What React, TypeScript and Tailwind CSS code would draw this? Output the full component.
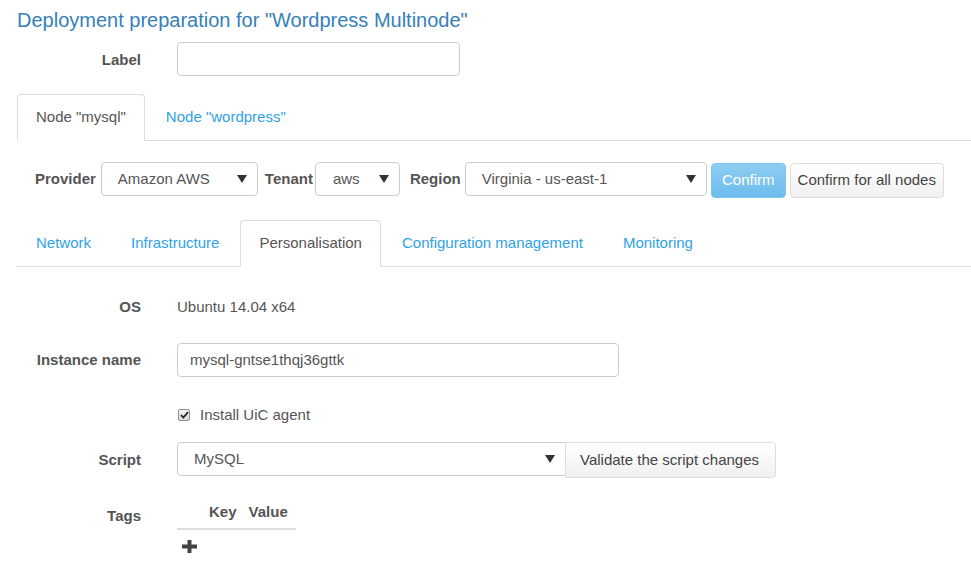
import React from 'react';

const font = { fontFamily: '"Liberation Sans", Arial, sans-serif' };

const Arrow: React.FC = () => (
  <svg width="10" height="8" viewBox="0 0 10 8" className="shrink-0">
    <path d="M0 0 L10 0 L5 8 Z" fill="#333" />
  </svg>
);

const Select: React.FC<{ value: string; className: string; pad?: string }> = ({ value, className, pad = 'pl-[16px]' }) => (
  <div className={`h-[34px] flex items-center justify-between bg-white border border-[#ccc] text-[#555] pr-[10px] ${pad} ${className}`}>
    <span>{value}</span>
    <Arrow />
  </div>
);

const NavTab: React.FC<{ label: string; active?: boolean }> = ({ label, active = false }) => (
  <div
    className={`h-[47px] px-[18px] mr-[2px] flex items-center rounded-t-[4px] border ${
      active
        ? 'bg-white border-[#ddd] border-b-white text-[#555] -mb-[1px]'
        : 'border-transparent text-[#2fa2e6]'
    }`}
  >
    {label}
  </div>
);

const Row: React.FC<{ label: string; children: React.ReactNode; className?: string }> = ({ label, children, className = '' }) => (
  <div className={`flex items-center ${className}`}>
    <div className="w-[124px] text-right font-bold text-[#555]">{label}</div>
    <div className="ml-[36px] flex items-center">{children}</div>
  </div>
);

export default function App() {
  return (
    <div className="w-[971px] h-[580px] overflow-hidden bg-white text-[15px] text-[#555] pl-[17px] pt-[9px]" style={font}>
      {/* Title */}
      <h1 className="text-[20px] leading-[22px] text-[#3680b8] font-normal">
        Deployment preparation for "Wordpress Multinode"
      </h1>

      {/* Label */}
      <Row label="Label" className="mt-[11px] h-[34px] pt-[2px]">
        <div className="w-[283px] h-[34px] -mt-[2px] border border-[#ccc] rounded-[4px] bg-white" />
      </Row>

      {/* Node tabs */}
      <div className="mt-[18px] h-[47px] flex border-b border-[#ddd]">
        <NavTab label={'Node "mysql"'} active />
        <NavTab label={'Node "wordpress"'} />
      </div>

      {/* Provider */}
      <div className="mt-[21px] h-[34px] pl-[18px] flex items-start">
        <span className="h-[34px] flex items-center font-bold mr-[5px]">Provider</span>
        <Select value="Amazon AWS" className="w-[157px] rounded-[4px]" />
        <span className="h-[34px] flex items-center font-bold ml-[7px] mr-[2px]">Tenant</span>
        <Select value="aws" className="w-[85px] rounded-[4px]" pad="pl-[17px]" />
        <span className="h-[34px] flex items-center font-bold ml-[10px] mr-[4px]">Region</span>
        <Select value="Virginia - us-east-1" className="w-[242px] rounded-[4px]" />
        <button className="shrink-0 ml-[4px] mt-[1px] h-[35px] w-[75px] rounded-[4px] border border-[#7ec6ef] bg-gradient-to-b from-[#8dcdf2] to-[#6cbcec] text-white">
          Confirm
        </button>
        <button className="shrink-0 ml-[4px] mt-[1px] h-[35px] w-[154px] rounded-[4px] border border-[#ddd] bg-gradient-to-b from-white to-[#f0f0f0] text-[#444]">
          Confirm for all nodes
        </button>
      </div>

      {/* Section tabs */}
      <div className="mt-[24px] h-[47px] flex border-b border-[#ddd]">
        <NavTab label="Network" />
        <NavTab label="Infrastructure" />
        <NavTab label="Personalisation" active />
        <NavTab label="Configuration management" />
        <NavTab label="Monitoring" />
      </div>

      {/* Personalisation form */}
      <Row label="OS" className="mt-[23px] h-[34px]">
        <span>Ubuntu 14.04 x64</span>
      </Row>

      <Row label="Instance name" className="mt-[19px] h-[34px]">
        <div className="w-[442px] h-[34px] border border-[#ccc] rounded-[4px] bg-white flex items-center pl-[12px]">
          mysql-gntse1thqj36gttk
        </div>
      </Row>

      <div className="mt-[28px] h-[20px] flex items-center pl-[161px]">
        <span className="w-[12px] h-[12px] border border-[#8f8f8f] rounded-[2px] bg-gradient-to-b from-[#f4f4f4] to-[#d8d8d8] flex items-center justify-center">
          <svg width="9" height="8" viewBox="0 0 9 8">
            <path d="M1 4.2 L3.4 6.5 L8 1.2" stroke="#222" strokeWidth="1.8" fill="none" />
          </svg>
        </span>
        <span className="ml-[10px]">Install UiC agent</span>
      </div>

      <div className="mt-[17px] flex items-start">
        <div className="w-[124px] h-[36px] flex items-center justify-end font-bold">Script</div>
        <div className="ml-[36px] flex items-start">
          <Select value="MySQL" className="w-[389px] rounded-l-[4px]" />
          <button className="h-[36px] w-[211px] -ml-[1px] pl-[14px] text-left rounded-r-[4px] border border-[#ddd] bg-gradient-to-b from-white to-[#f0f0f0] text-[#444]">
            Validate the script changes
          </button>
        </div>
      </div>

      <div className="mt-[18px] flex items-start">
        <div className="w-[124px] h-[40px] flex items-center justify-end font-bold">Tags</div>
        <div className="ml-[36px] flex flex-col">
          <div className="w-[119px] h-[34px] flex items-center font-bold border-b-2 border-[#ddd]">
            <span className="ml-[32px]">Key</span>
            <span className="ml-[12px]">Value</span>
          </div>
          <svg width="15" height="13" viewBox="0 0 15 13" className="mt-[10px] ml-[5px]">
            <rect x="5.5" y="0" width="4" height="13" fill="#444" />
            <rect x="0" y="4.5" width="15" height="4" fill="#444" />
          </svg>
        </div>
      </div>
    </div>
  );
}
